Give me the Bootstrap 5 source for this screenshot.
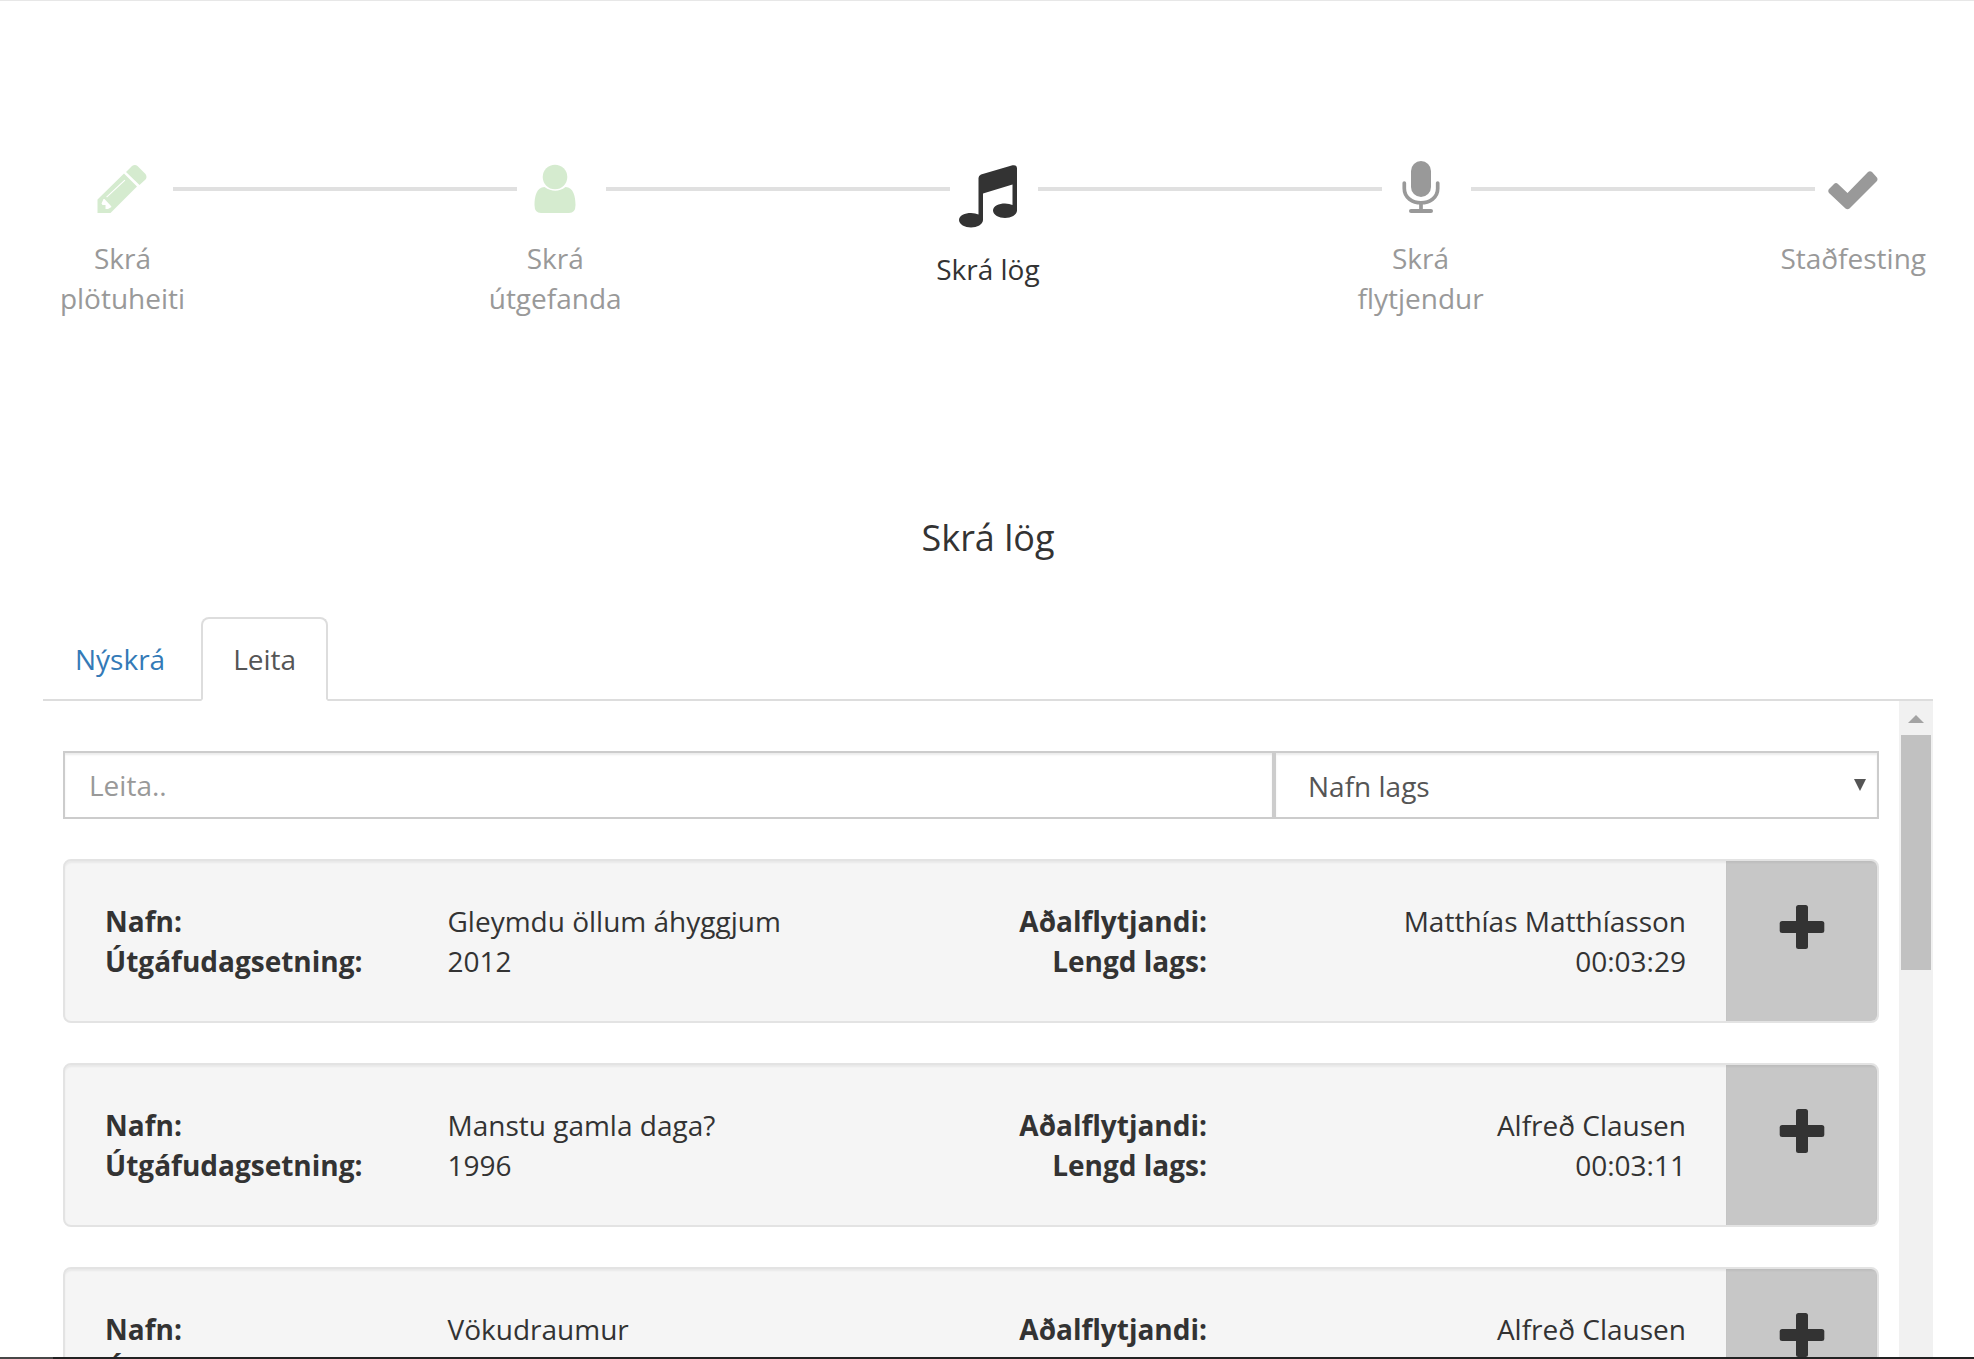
<!DOCTYPE html>
<html lang="is">
<head>
<meta charset="utf-8">
<title>Skrá lög</title>
<link href="https://cdn.jsdelivr.net/npm/bootstrap@5.3.0/dist/css/bootstrap.min.css" rel="stylesheet">
<style>
html,body{height:100%;overflow:hidden}
body{font-family:"Open Sans",sans-serif;font-size:28px;line-height:40px;color:#333;background:#fff}
.page{height:1359px;overflow:hidden;border-top:1px solid #e7e7e7}
.steps{padding:158px 0 0 84.2px;height:466px}
.step{flex:0 0 76.6px;width:76.6px;min-width:0;color:#999;white-space:nowrap;text-align:center}
.step svg{display:block;flex:none;fill:currentColor}
.step .pic{height:79px;display:flex;align-items:flex-start}
.step.done .pic{color:#d5ebcf}
.step.now{color:#333}
.step.now .pic{height:90px}
.wire{flex:0 0 344px;height:4px;margin:28px 0 0 12.1px;background:#e0e0e0}
.heading{font-size:36px;line-height:40px;height:80px;padding-top:51px;margin:0 0 70px;font-weight:400;padding-left:2px}
.tabs{margin:0 41px 0 43px;border-bottom:2px solid #ddd;--bs-nav-tabs-border-width:2px}
.tabs .nav-link{padding:20px 30px;height:84px;border:2px solid transparent;border-radius:8px 8px 0 0;margin-bottom:-2px;color:#337ab7}
.tabs .nav-link.active{color:#555;background:#fff;border-color:#ddd #ddd #fff}
.pane{margin:0 41px 0 43px;height:656px;overflow:hidden}
.results{padding:50px 20px 0;min-width:0}
.search{height:68px;margin-bottom:40px}
.search .form-control,.search .form-select{border:2px solid #ccc;border-radius:0;font-size:28px;line-height:40px;height:68px;box-shadow:inset 0 2px 2px rgba(0,0,0,.075);color:#555;background:#fff}
.search .form-control{flex:0 0 1211px;width:1211px;padding:11px 24px}
.search .form-control::placeholder{color:#999;opacity:1}
.pick{position:relative}
.search .form-select{padding:13px 32px 11px}
.pick svg{position:absolute;right:13px;top:28px}
.song{height:164px;margin-bottom:40px;border:2px solid #e3e3e3;border-radius:8px;background:#f5f5f5;box-shadow:inset 0 2px 2px rgba(0,0,0,.05);overflow:hidden}
.facts{display:grid;grid-template-columns:342.5px 420.5px 339px 479px;padding:40px 0 0 40px;flex:1}
.add{flex:0 0 151px;border:0;background:#c7c7c7;padding:44px 0 0;box-shadow:inset 0 2px 2px rgba(0,0,0,.05);display:flex;justify-content:center;align-items:flex-start}
.track{flex:0 0 34px;background:#f1f1f1;padding:0 2px}
.track svg{display:block;height:34px}
.thumb{height:235px;background:#c1c1c1}
.edge{height:2px;background:linear-gradient(90deg,#484848 53px,#222 53px)}
</style>
</head>
<body>
<div class="page d-flex flex-column">
  <div class="steps d-flex align-items-start flex-shrink-0">
    <div class="step done d-flex flex-column align-items-center">
      <div class="pic"><svg width="50" height="60" viewBox="98 159 50 60"><path fill-rule="evenodd" d="M98.500 213V199.500L125 173.500L138 186.500L111.500 213ZM104.500 199L102.500 203.500L103.500 205H106.500V209H109L112.500 207L112 206L105.500 199ZM108 197.500L126.300 180.500L125.500 179.700L107.200 196.700ZM127 172L133 166Q136 164 138.500 166L146.500 174Q148.500 177 146.500 179.500L140.500 185Z"/></svg></div>
      <div>Skrá<br>plötuheiti</div>
    </div>
    <div class="wire"></div>
    <div class="step done d-flex flex-column align-items-center">
      <div class="pic"><svg width="42" height="60" viewBox="534.500 159 42 60"><ellipse cx="555.500" cy="177" rx="12.300" ry="12.200"/><path d="M545 187C537 187 535 197 535 205Q535 213 541.500 213H569.500Q576 213 576 205C576 197 574 187 566 187Q556 194.500 545 187Z"/></svg></div>
      <div>Skrá<br>útgefanda</div>
    </div>
    <div class="wire"></div>
    <div class="step now d-flex flex-column align-items-center">
      <div class="pic"><svg width="58" height="70" viewBox="959 159 58 70"><path d="M978.500 178Q978.500 175.500 981 174.500L1012.500 165.300Q1017 164.500 1017 168.500V210.500C1017 215 1011 218 1005 218S993 215 993 210.500S999 203.500 1005 203.500Q1009.500 203.500 1012.500 205V184.500L983 193.500V220C983 224.500 977 227.500 971 227.500S959 224.500 959 220S965 213 971 213Q975.500 213 978.500 214.500Z"/></svg></div>
      <div>Skrá lög</div>
    </div>
    <div class="wire"></div>
    <div class="step d-flex flex-column align-items-center">
      <div class="pic"><svg width="38" height="60" viewBox="1401.500 159 38 60"><rect x="1410.500" y="161" width="20" height="36" rx="10"/><path d="M1403.800 183V188.500C1403.800 207.500 1437.200 207.500 1437.200 188.500V183M1420.500 203V211" fill="none" stroke="currentColor" stroke-width="3.700" stroke-linecap="round"/><rect x="1408.500" y="209" width="24" height="4" rx="2"/></svg></div>
      <div>Skrá<br>flytjendur</div>
    </div>
    <div class="wire"></div>
    <div class="step d-flex flex-column align-items-center">
      <div class="pic"><svg width="50" height="60" viewBox="1828 159 50 60"><path d="M1829 193Q1827.500 191 1829 189L1834 184Q1836 182 1838 184L1847.500 193L1868 172Q1870 170.500 1872 172L1876.500 177Q1878.500 179 1876.500 181.500L1849.500 208.500Q1847.500 210 1845.500 208.500Z"/></svg></div>
      <div>Staðfesting</div>
    </div>
  </div>
  <h1 class="heading text-center flex-shrink-0">Skrá lög</h1>
  <ul class="nav nav-tabs tabs flex-shrink-0">
    <li class="nav-item me-1"><a class="nav-link" href="#">Nýskrá</a></li>
    <li class="nav-item"><a class="nav-link active" href="#">Leita</a></li>
  </ul>
  <div class="pane d-flex flex-shrink-0">
    <div class="results flex-grow-1">
      <div class="search d-flex">
        <input class="form-control" type="text" placeholder="Leita..">
        <div class="pick flex-grow-1">
          <div class="form-select" role="combobox" tabindex="0">Nafn lags</div>
          <svg width="12" height="12" viewBox="0 0 12 12"><path d="M0 0H12L6 12Z" fill="#555"/></svg>
        </div>
      </div>
      <div class="song d-flex">
        <div class="facts"><b>Nafn:<br>Útgáfudagsetning:</b><div>Gleymdu öllum áhyggjum<br>2012</div><b class="text-end">Aðalflytjandi:<br>Lengd lags:</b><div class="text-end">Matthías Matthíasson<br>00:03:29</div></div>
        <button class="add" aria-label="+"><svg width="46" height="46" viewBox="0 0 46 46" fill="#333"><rect x="17" y="0" width="12" height="44" rx="2.500"/><rect x="0.700" y="16" width="44.600" height="12" rx="2.500"/></svg></button>
      </div>
      <div class="song d-flex">
        <div class="facts"><b>Nafn:<br>Útgáfudagsetning:</b><div>Manstu gamla daga?<br>1996</div><b class="text-end">Aðalflytjandi:<br>Lengd lags:</b><div class="text-end">Alfreð Clausen<br>00:03:11</div></div>
        <button class="add" aria-label="+"><svg width="46" height="46" viewBox="0 0 46 46" fill="#333"><rect x="17" y="0" width="12" height="44" rx="2.500"/><rect x="0.700" y="16" width="44.600" height="12" rx="2.500"/></svg></button>
      </div>
      <div class="song d-flex">
        <div class="facts"><b>Nafn:<br>Útgáfudagsetning:</b><div>Vökudraumur</div><b class="text-end">Aðalflytjandi:</b><div class="text-end">Alfreð Clausen</div></div>
        <button class="add" aria-label="+"><svg width="46" height="46" viewBox="0 0 46 46" fill="#333"><rect x="17" y="0" width="12" height="44" rx="2.500"/><rect x="0.700" y="16" width="44.600" height="12" rx="2.500"/></svg></button>
      </div>
    </div>
    <div class="track"><svg width="30" height="34" viewBox="0 0 30 34"><path d="M7 22L15 14L23 22Z" fill="#a3a3a3"/></svg><div class="thumb"></div></div>
  </div>
  <div class="edge flex-shrink-0"></div>
</div>
<script src="https://cdn.jsdelivr.net/npm/bootstrap@5.3.0/dist/js/bootstrap.bundle.min.js"></script>
</body>
</html>
